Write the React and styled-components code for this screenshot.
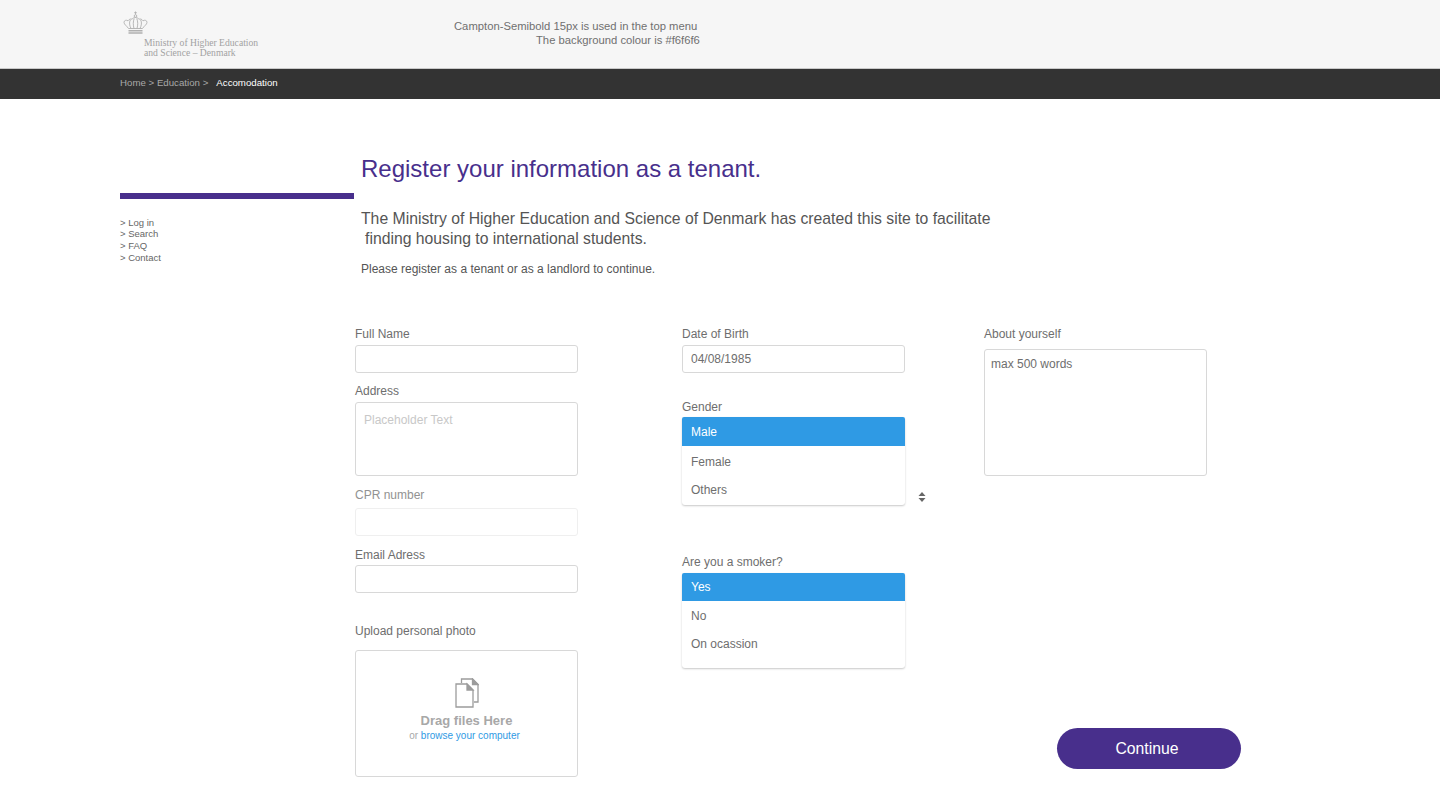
import React from 'react';
import styled, { createGlobalStyle } from 'styled-components';

const GlobalStyle = createGlobalStyle`
  html, body {
    margin: 0;
    padding: 0;
    background: #fff;
    font-family: "Liberation Sans", Arial, sans-serif;
    color: #666;
  }
  * { box-sizing: border-box; }
`;

const TopBar = styled.header`
  height: 69px;
  background: #f6f6f6;
  border-bottom: 1px solid #c9c9c9;
  display: flex;
  padding-left: 123px;
`;

const Logo = styled.div`
  width: 331px;
  padding-top: 11px;
`;

const LogoText = styled.div`
  margin: 2px 0 0 21px;
  font-family: "Liberation Serif", serif;
  font-size: 9.65px;
  line-height: 10px;
  color: #a2a2a2;
`;

const TopNote = styled.div`
  padding-top: 20px;
  font-size: 11.25px;
  line-height: 13.5px;
  color: #707070;
`;

const NoteLine = styled.div`
  padding-left: ${(p) => p.$indent || 0}px;
  white-space: nowrap;
`;

const Breadcrumb = styled.nav`
  height: 30px;
  background: #333;
  display: flex;
  align-items: center;
  padding: 0 0 3px 120px;
  font-size: 9.7px;
  color: #a8a8a8;
`;

const Current = styled.span`
  margin-left: 8px;
  color: #fff;
`;

const Main = styled.main`
  display: flex;
  padding-left: 120px;
`;

const Sidebar = styled.aside`
  width: 234px;
  padding-top: 94px;
  flex: none;
`;

const SideRule = styled.div`
  height: 6px;
  background: #482f8c;
  margin-bottom: 17.7px;
`;

const SideLink = styled.div`
  font-size: 9.5px;
  line-height: 11.7px;
  color: #666;
`;

const Content = styled.div`
  flex: 1;
`;

const Intro = styled.section`
  padding: 54px 0 0 7px;
  height: 227px;
`;

const Title = styled.h1`
  margin: 0;
  font-size: 24px;
  line-height: 32px;
  font-weight: 400;
  color: #482f8c;
`;

const Lead = styled.p`
  margin: 24px 0 0;
  font-size: 15.75px;
  line-height: 20px;
  color: #555;
`;

const LeadIndent = styled.span`
  display: block;
  padding-left: 4px;
`;

const Small = styled.p`
  margin: 12px 0 0;
  font-size: 12px;
  line-height: 16px;
  color: #555;
`;

const Form = styled.form`
  display: flex;
  padding-left: 1px;
`;

const Column = styled.div`
  display: flex;
  flex-direction: column;
  flex: none;
  width: ${(p) => p.$width}px;
  margin-left: ${(p) => p.$offset || 0}px;
`;

const Label = styled.label`
  display: block;
  font-size: 12px;
  line-height: 16px;
  height: 16px;
  margin-top: ${(p) => p.$top || 0}px;
  margin-bottom: ${(p) => p.$bottom ?? 3}px;
  color: ${(p) => (p.$faint ? '#929292' : '#6e6e6e')};
  white-space: nowrap;
`;

const Input = styled.div`
  width: 223px;
  height: ${(p) => p.$height || 28}px;
  border: 1px solid ${(p) => (p.$faint ? '#efefef' : '#d8d8d8')};
  border-radius: 3px;
  background: #fff;
  padding: ${(p) => p.$pad || 0}px ${(p) => p.$side ?? 8}px 0;
  display: flex;
  align-items: ${(p) => (p.$pad ? 'flex-start' : 'center')};
  font-size: 12px;
  line-height: 16px;
  color: ${(p) => (p.$placeholder ? '#c8c8c8' : '#6e6e6e')};
`;

const ListBox = styled.div`
  position: relative;
  height: ${(p) => p.$height}px;
  border-radius: 3px;
  background: #fff;
  box-shadow: 0 1px 2px rgba(0, 0, 0, 0.22);
`;

const Selected = styled.div`
  height: ${(p) => p.$height}px;
  background: #2f9ae4;
  border-radius: 2px 2px 0 0;
  display: flex;
  align-items: center;
  padding-left: 9px;
  font-size: 12px;
  color: #fff;
`;

const Option = styled.div`
  height: 28px;
  display: flex;
  align-items: center;
  padding-left: 9px;
  font-size: 12px;
  color: #6e6e6e;
  margin-top: ${(p) => p.$top || 0}px;
`;

const Stepper = styled.svg`
  position: absolute;
  left: 236px;
  top: 75px;
`;

const DropZone = styled.div`
  height: 127px;
  border: 1px solid #d8d8d8;
  border-radius: 3px;
  display: flex;
  flex-direction: column;
  align-items: center;
  padding-top: 27px;
`;

const DropTitle = styled.div`
  margin-top: 5px;
  font-size: 13px;
  line-height: 16px;
  font-weight: 700;
  color: #a8a8a8;
`;

const DropHint = styled.div`
  margin-right: 4px;
  font-size: 10px;
  line-height: 14px;
  color: #a8a8a8;
`;

const BrowseLink = styled.span`
  color: #2f9ae4;
`;

const ContinueButton = styled.button`
  width: 184px;
  height: 41px;
  margin: auto 0 8px 73px;
  padding: 0 4px 0 0;
  border: none;
  border-radius: 21px;
  background: #482f8c;
  color: #fff;
  font-family: inherit;
  font-size: 15.75px;
`;

const CrownIcon = styled.svg`
  display: block;
`;

function Crown() {
  return (
    <CrownIcon width="25" height="25" viewBox="0 0 25 25" fill="none" stroke="#b0b0b0" strokeWidth="0.9">
      <path d="M12.500 0.500v3M11.200 1.700h2.600" />
      <circle cx="12.500" cy="5" r="1.300" />
      <path d="M5.500 17.500C4 15 1 13.600 1 11.300 1 9.500 3.200 8.600 5 9.800 6 8.300 7.600 7.600 9 8.200 10 7 11.300 6.500 12.500 6.500s2.500.5 3.500 1.700c1.400-.6 3 .1 4 1.600 1.800-1.200 4-.3 4 1.500 0 2.300-3 3.700-4.500 6.200z" />
      <path d="M8 17.500C6.500 14.500 6 11.500 7.300 9M11 17.500C10 14 10 10.500 11.200 7.500M14 17.500c1-3.500 1-7-.2-10M17 17.500c1.500-3 2-6 .7-8.500" />
      <path d="M5.500 19.800h14M5.500 22h14" strokeWidth="1.500" />
    </CrownIcon>
  );
}

const FilesGlyph = styled.svg`
  display: block;
`;

function FilesIcon() {
  return (
    <FilesGlyph width="24" height="30" viewBox="0 0 24 30" fill="none" stroke="#9c9c9c" strokeWidth="1.300">
      <path d="M6.500 5V1h11l5.500 5.500V24h-4" />
      <path d="M17.500 1v5.500H23z" fill="#9c9c9c" />
      <path d="M1 6h11l6 6v17H1z" fill="#fff" />
      <path d="M12 6v6h6z" fill="#9c9c9c" />
    </FilesGlyph>
  );
}

export default function App() {
  return (
    <>
      <GlobalStyle />
      <TopBar>
        <Logo>
          <Crown />
          <LogoText>
            Ministry of Higher Education
            <br />
            and Science – Denmark
          </LogoText>
        </Logo>
        <TopNote>
          <NoteLine>Campton-Semibold 15px is used in the top menu</NoteLine>
          <NoteLine $indent={82}>The background colour is #f6f6f6</NoteLine>
        </TopNote>
      </TopBar>
      <Breadcrumb>
        Home &gt; Education &gt; <Current>Accomodation</Current>
      </Breadcrumb>
      <Main>
        <Sidebar>
          <SideRule />
          <SideLink>&gt; Log in</SideLink>
          <SideLink>&gt; Search</SideLink>
          <SideLink>&gt; FAQ</SideLink>
          <SideLink>&gt; Contact</SideLink>
        </Sidebar>
        <Content>
          <Intro>
            <Title>Register your information as a tenant.</Title>
            <Lead>
              The Ministry of Higher Education and Science of Denmark has created this site to facilitate
              <LeadIndent>finding housing to international students.</LeadIndent>
            </Lead>
            <Small>Please register as a tenant or as a landlord to continue.</Small>
          </Intro>
          <Form as="div">
            <Column $width={223}>
              <Label>Full Name</Label>
              <Input />
              <Label $top={10}>Address</Label>
              <Input $height={74} $pad={9} $placeholder>Placeholder Text</Input>
              <Label $top={11} $bottom={5} $faint>CPR number</Label>
              <Input $faint />
              <Label $top={11} $bottom={2}>Email Adress</Label>
              <Input />
              <Label $top={30} $bottom={11}>Upload personal photo</Label>
              <DropZone>
                <FilesIcon />
                <DropTitle>Drag files Here</DropTitle>
                <DropHint>
                  or <BrowseLink>browse your computer</BrowseLink>
                </DropHint>
              </DropZone>
            </Column>
            <Column $width={223} $offset={104}>
              <Label>Date of Birth</Label>
              <Input>04/08/1985</Input>
              <Label $top={26} $bottom={2}>Gender</Label>
              <ListBox $height={88}>
                <Selected $height={29}>Male</Selected>
                <Option $top={2}>Female</Option>
                <Option>Others</Option>
                <Stepper width="8" height="10" viewBox="0 0 8 10" fill="#666">
                  <path d="M4 0l3.500 4H.5zM4 10L.5 6h7z" />
                </Stepper>
              </ListBox>
              <Label $top={49} $bottom={3}>Are you a smoker?</Label>
              <ListBox $height={95}>
                <Selected $height={28}>Yes</Selected>
                <Option $top={1}>No</Option>
                <Option>On ocassion</Option>
              </ListBox>
            </Column>
            <Column $width={257} $offset={79}>
              <Label $bottom={7}>About yourself</Label>
              <Input $height={127} $pad={6} $side={6}>max 500 words</Input>
              <ContinueButton type="button">Continue</ContinueButton>
            </Column>
          </Form>
        </Content>
      </Main>
    </>
  );
}
